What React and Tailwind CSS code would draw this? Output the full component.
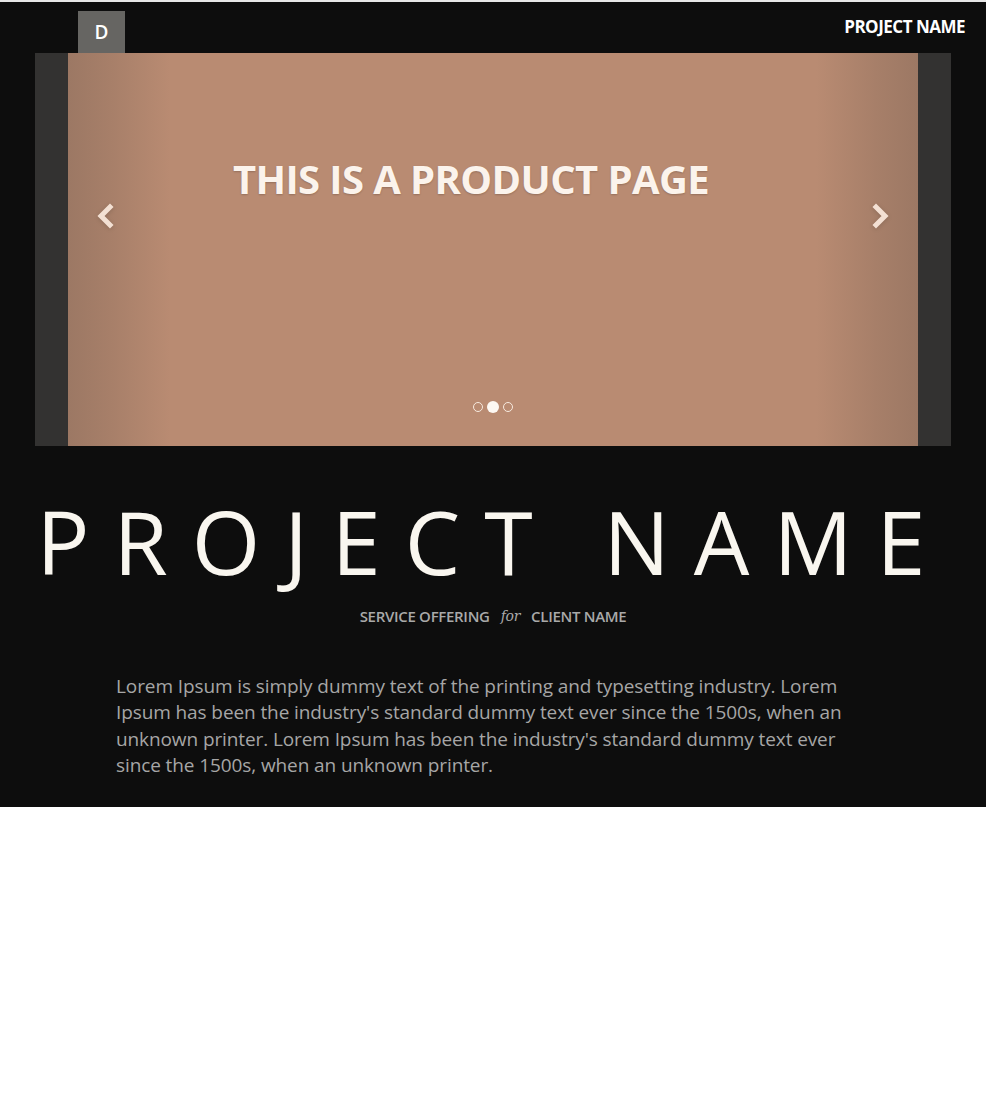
import React from "react";

function Chevron({ dir }) {
  return (
    <svg width="22" height="26" viewBox="0 0 22 26" className="drop-shadow-sm">
      <polyline
        points={dir === "left" ? "15,4 6,13 15,22" : "7,4 16,13 7,22"}
        fill="none"
        stroke="#f3e0d3"
        strokeWidth="5"
        strokeLinecap="square"
        strokeLinejoin="miter"
      />
    </svg>
  );
}

export default function App() {
  return (
    <div className="min-h-screen bg-white font-['Open_Sans',sans-serif]">
      <div className="border-t-2 border-[#e6e6e6] bg-[#0d0d0d] pb-7">
        {/* Header */}
        <div className="flex h-[51px] items-start justify-between pl-[78px] pr-[21px]">
          <div className="mt-[9px] flex h-[42px] w-[47px] items-center justify-center bg-[#666562] text-[19px] font-semibold text-white">
            D
          </div>
          <div className="mt-[12px] text-[17px] font-bold tracking-[-0.5px] text-white">PROJECT NAME</div>
        </div>

        {/* Carousel */}
        <div className="mx-[35px] flex h-[393px] bg-[#333231] px-[33px]">
          <div className="relative flex flex-1 flex-col items-center bg-[linear-gradient(to_right,#9c7864_0%,#a77f69_5%,#b98b72_12%,#b98b72_88%,#a77f69_95%,#9c7864_100%)]">
            <h1 className="mt-[106px] pr-[44px] text-[40px] font-bold leading-none tracking-[-0.6px] text-[#fbf3ec] [text-shadow:0_1px_2px_rgba(0,0,0,0.2)]">
              THIS IS A PRODUCT PAGE
            </h1>
            <div className="absolute left-[27px] top-[150px]">
              <Chevron dir="left" />
            </div>
            <div className="absolute right-[27px] top-[150px]">
              <Chevron dir="right" />
            </div>
            <div className="absolute bottom-[33px] left-0 right-0 flex items-center justify-center gap-[4px]">
              <span className="h-[10px] w-[10px] rounded-full border border-[#f7eadf]" />
              <span className="h-[12px] w-[12px] rounded-full bg-[#fdf8f3]" />
              <span className="h-[10px] w-[10px] rounded-full border border-[#f7eadf]" />
            </div>
          </div>
        </div>

        {/* Title */}
        <h2 className="mt-[40px] text-center text-[88px] font-medium leading-[110px] tracking-[24px] text-[#f9f6ef]">
          PROJECT NAME
        </h2>
        <div className="mt-[9px] flex items-center justify-center gap-[11px] text-[15px] font-semibold tracking-[-0.3px] text-[#a9a9a9]">
          <span>SERVICE OFFERING</span>
          <span className="font-['DejaVu_Serif',serif] text-[14px] font-normal italic">for</span>
          <span>CLIENT NAME</span>
        </div>

        {/* Description */}
        <p className="mx-auto mt-[45px] w-[754px] text-[19px] leading-[26.5px] tracking-[-0.1px] text-[#a6a6a6]">
          Lorem Ipsum is simply dummy text of the printing and typesetting industry. Lorem Ipsum has been the
          industry's standard dummy text ever since the 1500s, when an unknown printer. Lorem Ipsum has been the
          industry's standard dummy text ever since the 1500s, when an unknown printer.
        </p>
      </div>
    </div>
  );
}
